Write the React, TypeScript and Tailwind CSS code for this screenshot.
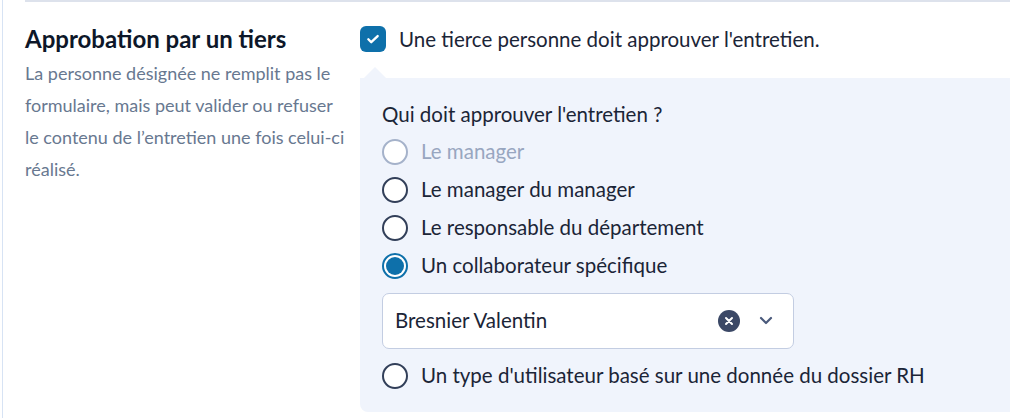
import React from 'react'

const FONT = "font-['Lato','Liberation_Sans',sans-serif]"

type Option = {
  label: string
  state: 'disabled' | 'off' | 'on'
}

const OPTIONS_TOP: Option[] = [
  { label: 'Le manager', state: 'disabled' },
  { label: 'Le manager du manager', state: 'off' },
  { label: 'Le responsable du département', state: 'off' },
  { label: 'Un collaborateur spécifique', state: 'on' },
]

const Radio = ({ label, state }: Option) => {
  const ring =
    state === 'disabled'
      ? 'border-[#a5b2ca]'
      : state === 'on'
        ? 'border-[#0e70aa]'
        : 'border-[#323f59]'

  return (
    <label className="flex h-[38px] items-center gap-[13px]">
      <span
        className={`flex h-[26px] w-[26px] shrink-0 items-center justify-center rounded-full border-2 bg-white ${ring}`}
      >
        {state === 'on' && <span className="h-[18px] w-[18px] rounded-full bg-[#0e70aa]" />}
      </span>
      <span className={state === 'disabled' ? 'text-[#98a6c0]' : 'text-[#1b2537]'}>{label}</span>
    </label>
  )
}

export default function App() {
  return (
    <div className={`${FONT} h-[418px] w-[1010px] overflow-hidden bg-white`}>
      <div className="ml-[2px] h-full border-l border-[#d7e3f4] pl-[22px]">
        <div className="flex border-t-2 border-[#dde2ec] pt-[22px]">
          <div className="w-[335px] shrink-0">
            <h2 className="text-[24px] leading-[30px] font-bold text-[#0d1729]">Approbation par un tiers</h2>
            <p className="mt-[3px] w-[323px] text-[18px] leading-[32px] text-[#687890]">
              La personne désignée ne remplit pas le formulaire, mais peut valider ou refuser le contenu de l’entretien une fois celui-ci réalisé.
            </p>
          </div>

          <div className="flex-1">
            <label className="flex items-center gap-[13px]">
              <span className="flex h-[26px] w-[26px] items-center justify-center rounded-[6px] bg-[#0e70aa]">
                <svg width="14" height="14" viewBox="0 0 24 24" fill="none" stroke="white" strokeWidth="4" strokeLinecap="round" strokeLinejoin="round">
                  <path d="M4 12.5l5 5L20 7" />
                </svg>
              </span>
              <span className="text-[20.5px] text-[#1b2537]">Une tierce personne doit approuver l'entretien.</span>
            </label>

            <div className="relative mt-[23px] rounded-bl-[8px] bg-[#f0f4fc] pt-[20px] pb-[17px] pl-[22px] text-[20.5px]">
              <span className="absolute -top-[11px] left-[4px] h-0 w-0 border-x-[11px] border-b-[11px] border-x-transparent border-b-[#f0f4fc]" />
              <p className="mb-[3px] leading-[32px] text-[#1b2537]">Qui doit approuver l'entretien ?</p>
              {OPTIONS_TOP.map((o) => (
                <Radio key={o.label} {...o} />
              ))}
              <div className="mt-[8px] mb-[8px] flex h-[56px] w-[412px] items-center rounded-[7px] border border-[#c3cde2] bg-white pr-[20px] pl-[12px]">
                <span className="flex-1 text-[#1b2537]">Bresnier Valentin</span>
                <span className="flex h-[22px] w-[22px] items-center justify-center rounded-full bg-[#3b4866]">
                  <svg width="10" height="10" viewBox="0 0 10 10" stroke="white" strokeWidth="2" strokeLinecap="round">
                    <path d="M2 2l6 6M8 2l-6 6" />
                  </svg>
                </span>
                <svg className="ml-[19px]" width="14" height="9" viewBox="0 0 14 9" fill="none" stroke="#4a5a7c" strokeWidth="2.2" strokeLinecap="round" strokeLinejoin="round">
                  <path d="M2 2l5 5 5-5" />
                </svg>
              </div>
              <Radio label="Un type d'utilisateur basé sur une donnée du dossier RH" state="off" />
            </div>
          </div>
        </div>
      </div>
    </div>
  )
}
